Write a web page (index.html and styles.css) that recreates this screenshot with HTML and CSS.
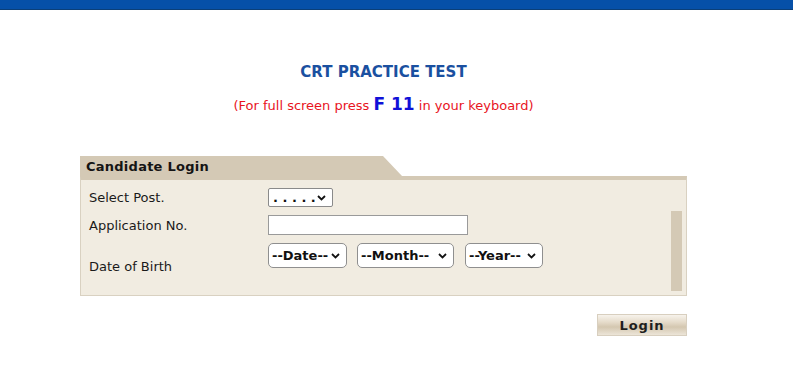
FILE: index.html
```html
<!DOCTYPE html>
<html>
<head>
<meta charset="utf-8">
<link rel="stylesheet" href="styles.css">
</head>
<body>
<div class="topbar"></div>
<div class="page">
  <h1 class="title">CRT PRACTICE TEST</h1>
  <p class="hint">(For full screen press <span class="key">F 11</span> in your keyboard)</p>

  <div class="panel">
    <div class="tab"><span class="tab-label">Candidate Login</span></div>
    <div class="panel-body">
      <div class="form">
        <div class="row row-post">
          <label class="lbl">Select Post.</label>
          <select class="sel sel-post"><option>. . . . .</option></select>
        </div>
        <div class="row row-app">
          <label class="lbl">Application No.</label>
          <input class="txt" type="text">
        </div>
        <div class="row row-dob">
          <label class="lbl lbl-dob">Date of Birth</label>
          <div class="dob">
            <select class="sel sel-r sel-date"><option>--Date--</option></select>
            <select class="sel sel-r sel-month"><option>--Month--</option></select>
            <select class="sel sel-r sel-year"><option>--Year--</option></select>
          </div>
        </div>
      </div>
      <div class="track"></div>
    </div>
  </div>

  <div class="actions">
    <button class="btn" type="button">Login</button>
  </div>
</div>
</body>
</html>
```

FILE: styles.css
```css
html, body {
  margin: 0;
  padding: 0;
  background: #ffffff;
}
body {
  font-family: "DejaVu Sans", Verdana, sans-serif;
  font-size: 13px;
  color: #1a1a1a;
}
.topbar {
  height: 9px;
  background: #0650a8;
  border-bottom: 1px solid #0b3f78;
}
.page {
  width: 607px;
  margin-left: 80px;
}
.title {
  margin: 53px 0 0;
  text-align: center;
  font-size: 15px;
  font-weight: bold;
  color: #1a50a0;
  line-height: 18px;
}
.hint {
  margin: 13px 0 0;
  text-align: center;
  font-size: 13px;
  color: #e8141e;
  line-height: 20px;
}
.key {
  font-size: 17px;
  font-weight: bold;
  color: #1010d8;
}
.panel {
  margin-top: 40px;
}
.tab {
  width: 322px;
  height: 20px;
  background: #d4c9b5;
  clip-path: polygon(0 0, 303px 0, 322px 100%, 0 100%);
  display: flex;
  align-items: center;
}
.tab-label {
  padding-left: 6px;
  font-weight: bold;
  letter-spacing: 0.25px;
  color: #141414;
}
.panel-body {
  display: flex;
  background: #f1ece1;
  border-top: 4px solid #d4c9b5;
  border-left: 1px solid #d9d1c1;
  border-right: 1px solid #d9d1c1;
  border-bottom: 1px solid #d9d1c1;
  height: 115px;
}
.form {
  flex: 1;
  padding: 7px 0 0 8px;
  display: flex;
  flex-direction: column;
}
.row {
  display: grid;
  grid-template-columns: 179px auto;
  align-items: center;
}
.row-post { height: 21px; }
.row-app { height: 20px; margin-top: 7px; }
.row-dob { margin-top: 8px; align-items: start; }
.lbl-dob { margin-top: 16px; }
.sel {
  -webkit-appearance: none;
  appearance: none;
  font-family: "DejaVu Sans", Verdana, sans-serif;
  font-size: 13px;
  font-weight: bold;
  color: #111;
  background-color: #fff;
  background-image: url("data:image/svg+xml;utf8,<svg xmlns='http://www.w3.org/2000/svg' width='9' height='6' viewBox='0 0 9 6'><path d='M1 1 L4.5 4.5 L8 1' fill='none' stroke='%23111' stroke-width='1.8'/></svg>");
  background-repeat: no-repeat;
  margin: 0;
  outline: none;
}
.sel-post {
  width: 65px;
  height: 19px;
  border: 1px solid #8a8a8a;
  border-radius: 2px;
  padding: 0 0 0 4px;
  line-height: 17px;
  background-position: right 6px center;
  letter-spacing: 0;
}
.txt {
  width: 200px;
  height: 20px;
  box-sizing: border-box;
  border: 1px solid #9a9a9a;
  background: #fff;
  margin: 0;
  padding: 0 3px;
}
.dob {
  display: flex;
  gap: 10px;
}
.sel-r {
  height: 25px;
  border: 1px solid #8f8f8f;
  border-radius: 5px;
  padding: 0 0 0 3px;
  background-position: right 6px center;
}
.sel-date { width: 79px; }
.sel-month { width: 97px; }
.sel-year { width: 78px; margin-left: 1px; }
.track {
  width: 11px;
  margin: 31px 4px 4px 0;
  background: #d4c9b5;
}
.actions {
  display: flex;
  justify-content: flex-end;
  margin-top: 18px;
}
.btn {
  width: 90px;
  height: 22px;
  border: 1px solid #d8cfbf;
  background: linear-gradient(to bottom, #f7f3ec 0%, #e6dccb 35%, #d4c7b0 60%, #ece5d8 100%);
  font-family: "DejaVu Sans", Verdana, sans-serif;
  font-size: 13px;
  font-weight: bold;
  letter-spacing: 1px;
  color: #1e1e1e;
  padding: 0;
}
```
